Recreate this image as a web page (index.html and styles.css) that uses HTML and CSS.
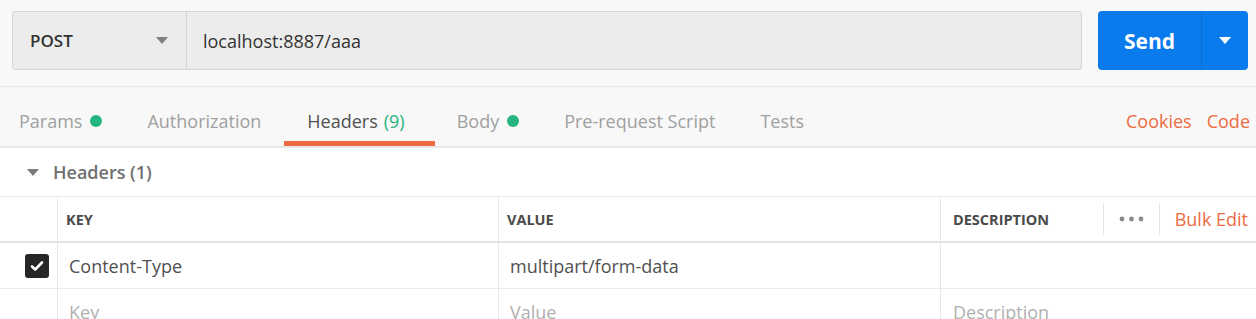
FILE: index.html
```html
<!DOCTYPE html>
<html lang="en">
<head>
    <meta charset="UTF-8">
    <title>Request</title>
    <link rel="stylesheet" href="styles.css">
</head>
<body>

<div class="request-bar">
    <div class="url-group">
        <div class="method">
            <span>POST</span>
            <span class="caret"></span>
        </div>
        <div class="url">localhost:8887/aaa</div>
    </div>
    <div class="send">
        <span class="send-label">Send</span>
        <span class="send-more"><span class="caret white"></span></span>
    </div>
</div>

<div class="tabs">
    <div class="tab first">Params <span class="dot"></span></div>
    <div class="tab">Authorization</div>
    <div class="tab active">Headers <span class="count">(9)</span></div>
    <div class="tab">Body <span class="dot"></span></div>
    <div class="tab">Pre-request Script</div>
    <div class="tab">Tests</div>
    <div class="tab-links">
        <a>Cookies</a>
        <a>Code</a>
    </div>
</div>

<div class="section-title">
    <span class="caret small"></span>
    Headers (1)
</div>

<div class="table">
    <div class="row head">
        <div class="cell check"></div>
        <div class="cell key">KEY</div>
        <div class="cell value">VALUE</div>
        <div class="cell desc">
            <span>DESCRIPTION</span>
            <div class="head-tools">
                <span class="more">
                    <svg width="25" height="6" viewBox="0 0 25 6"><circle cx="3" cy="3" r="2.4" fill="#8a8a8a"/><circle cx="12.5" cy="3" r="2.4" fill="#8a8a8a"/><circle cx="22" cy="3" r="2.4" fill="#8a8a8a"/></svg>
                </span>
                <a class="bulk">Bulk Edit</a>
            </div>
        </div>
    </div>
    <div class="row">
        <div class="cell check">
            <span class="checkbox">
                <svg width="16" height="16" viewBox="0 0 16 16"><path d="M3 8.5l3.2 3L13 4.5" fill="none" stroke="#fff" stroke-width="2.6" stroke-linecap="round" stroke-linejoin="round"/></svg>
            </span>
        </div>
        <div class="cell key">Content-Type</div>
        <div class="cell value">multipart/form-data</div>
        <div class="cell desc"></div>
    </div>
    <div class="row placeholder">
        <div class="cell check"></div>
        <div class="cell key">Key</div>
        <div class="cell value">Value</div>
        <div class="cell desc">Description</div>
    </div>
</div>

</body>
</html>
```

FILE: styles.css
```css
* {
    box-sizing: border-box;
}
body {
    margin: 0;
    font-family: 'Open Sans', 'Liberation Sans', sans-serif;
    font-size: 18px;
    color: #505050;
    background-color: #fff;
}
.request-bar {
    display: flex;
    background-color: #f8f8f8;
    padding: 11px 8px 16px 12px;
    border-bottom: 1px solid #e8e8e8;
}
.url-group {
    flex: 1;
    display: flex;
    height: 59px;
    background-color: #ececec;
    border: 1px solid #d4d4d4;
    border-radius: 3px;
    margin-right: 16px;
}
.method {
    width: 174px;
    padding: 0 8px 0 17px;
    display: flex;
    align-items: center;
    justify-content: space-between;
    border-right: 1px solid #d4d4d4;
    font-weight: 600;
    font-size: 17px;
    color: #333;
}
.url {
    display: flex;
    align-items: center;
    padding-left: 16px;
    color: #333;
}
.caret {
    width: 0;
    height: 0;
    border-left: 6px solid transparent;
    border-right: 6px solid transparent;
    border-top: 7px solid #808080;
    margin-right: 10px;
}
.caret.white {
    border-top-color: #fff;
    margin: 0;
}
.caret.small {
    border-top-color: #7a7a7a;
    margin: 0 14px 0 0;
}
.send {
    width: 150px;
    height: 59px;
    display: flex;
    background-color: #097bed;
    border-radius: 4px;
    color: #fff;
}
.send-label {
    width: 104px;
    display: flex;
    align-items: center;
    justify-content: center;
    font-weight: 700;
    font-size: 21px;
    border-right: 1px solid #0a6cd0;
}
.send-more {
    flex: 1;
    display: flex;
    align-items: center;
    justify-content: center;
}
.tabs {
    display: flex;
    align-items: stretch;
    height: 61px;
    background-color: #f8f8f8;
    border-bottom: 2px solid #e8e8e8;
}
.tab {
    display: flex;
    align-items: center;
    padding: 14px 23px 0 22px;
    color: #a0a0a0;
    border-bottom: 5px solid transparent;
}
.tab.first {
    padding-left: 19px;
}
.tab.active {
    color: #505050;
    border-bottom-color: #ec6b3f;
    padding-left: 23px;
    padding-right: 30px;
}
.count {
    color: #26b47f;
    margin-left: 6px;
}
.dot {
    width: 12px;
    height: 12px;
    border-radius: 50%;
    background-color: #26b47f;
    margin-left: 8px;
}
.tab-links {
    margin-left: auto;
    display: flex;
    align-items: center;
    gap: 15px;
    padding: 14px 6px 5px 0;
}
.tab-links a, .bulk {
    color: #ec6b3f;
}
.section-title {
    display: flex;
    align-items: center;
    height: 49px;
    padding-left: 27px;
    font-weight: 600;
    font-size: 18px;
    color: #707070;
    border-bottom: 1px solid #e8e8e8;
}
.row {
    display: flex;
    height: 46px;
    border-bottom: 1px solid #ececec;
}
.row.head {
    height: 46px;
    border-bottom: 2px solid #e2e2e2;
}
.cell {
    display: flex;
    align-items: center;
    padding-left: 11px;
    border-right: 1px solid #e8e8e8;
}
.cell.check {
    width: 58px;
    padding: 0;
    justify-content: flex-end;
}
.cell.key {
    width: 441px;
}
.cell.value {
    width: 442px;
}
.cell.desc {
    flex: 1;
    border-right: none;
    padding-left: 12px;
}
.row.head .cell {
    font-weight: 700;
    font-size: 14.5px;
    color: #4a4a4a;
    padding-left: 8px;
}
.row.head .cell.check {
    padding: 0;
}
.row.head .cell.desc {
    padding-left: 12px;
}
.head-tools {
    margin-left: auto;
    display: flex;
    align-items: center;
    height: 32px;
    font-weight: 400;
    font-size: 18px;
}
.more {
    height: 100%;
    display: flex;
    align-items: center;
    padding: 0 15px;
    border-left: 1px solid #e4e4e4;
    border-right: 1px solid #e4e4e4;
}
.bulk {
    padding: 0 8px 0 15px;
}
.checkbox {
    width: 24px;
    height: 24px;
    background-color: #262626;
    border-radius: 3px;
    display: flex;
    align-items: center;
    justify-content: center;
    margin-right: 8px;
}
.placeholder .cell {
    color: #b0b0b0;
}
```
